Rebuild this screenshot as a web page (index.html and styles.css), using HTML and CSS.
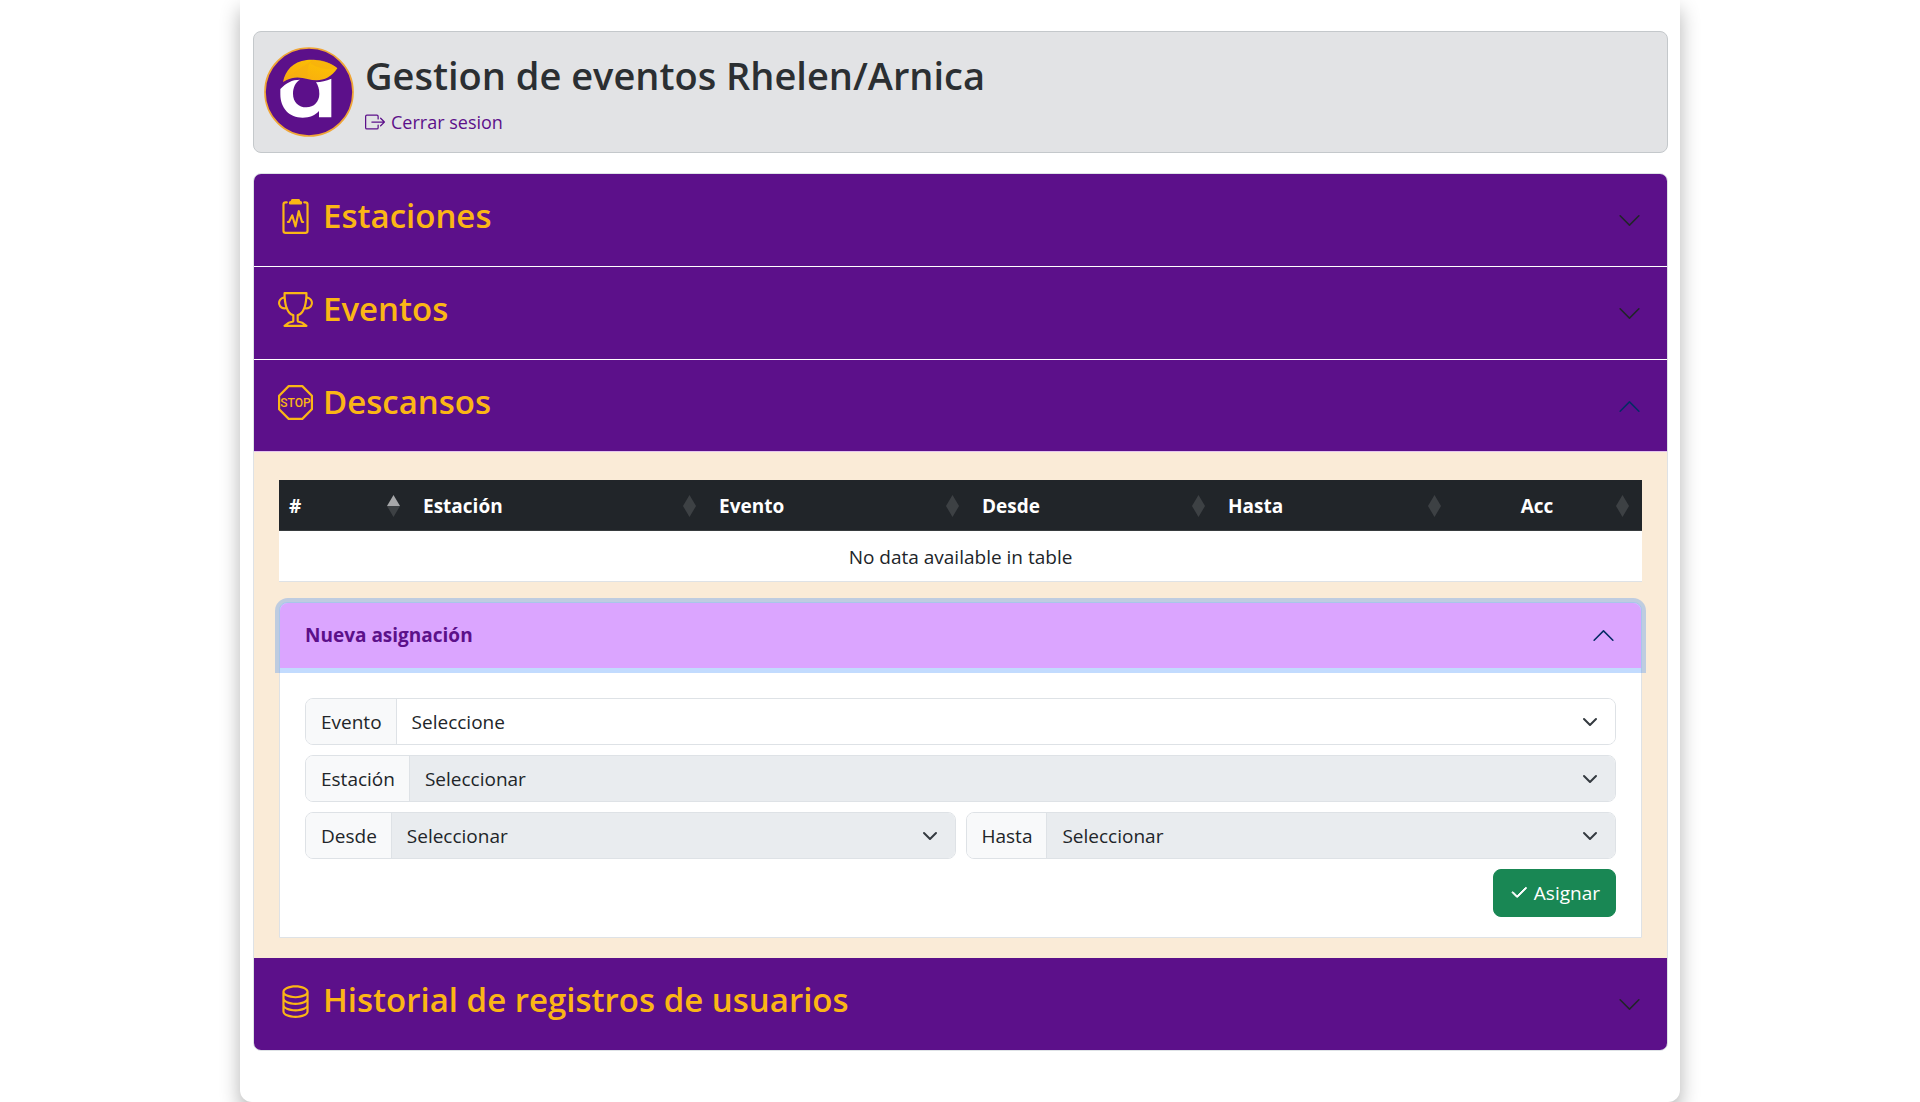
FILE: index.html
```html
<!DOCTYPE html>
<html lang="es">
<head>
<meta charset="utf-8">
<meta name="viewport" content="width=device-width, initial-scale=1">
<title>Gestion de eventos Rhelen/Arnica</title>
<link rel="stylesheet" href="styles.css">
</head>
<body>
<main class="page">
  <header class="banner">
    <svg class="logo" viewBox="104 142 270 270" aria-hidden="true">
      <defs>
        <linearGradient id="leaf" x1="0" y1="1" x2="1" y2="0">
          <stop offset="0" stop-color="#f7a813"/>
          <stop offset="1" stop-color="#fdc500"/>
        </linearGradient>
      </defs>
      <circle cx="239" cy="277" r="132" fill="#5c108a" stroke="#f0a636" stroke-width="5"/>
      <path fill="#fff" d="M153 268C170 250 188 240 212 240C198 248 191 264 191 282C191 307 208 323 231 323C254 323 270 306 270 283C270 268 266 256 260 248C276 247 290 244 306 237V353H269V334C258 347 241 354 220 354C180 354 153 326 153 283Z"/>
      <path fill="url(#leaf)" d="M161 247C168 213 190 186 232 181C268 177 306 189 324 206C307 232 285 242 262 242C232 242 204 220 161 247Z"/>
      <path fill="#f5ad10" opacity=".55" d="M250 180C276 179 306 189 324 206C305 212 272 208 252 196Q236 190 250 180Z"/>
      <path fill="#f5ad10" opacity=".5" d="M250 182C236 193 230 210 236 235C215 230 195 228 161 247C190 222 218 202 250 182Z"/>
    </svg>
    <div>
      <h1 class="banner-title">Gestion de eventos Rhelen/Arnica</h1>
      <a class="logout" href="#"><svg class="icon-sm" viewBox="0 0 16 16" aria-hidden="true"><path d="M10 12.5a.5.5 0 0 1-.5.5h-8a.5.5 0 0 1-.5-.5v-9a.5.5 0 0 1 .5-.5h8a.5.5 0 0 1 .5.5v2a.5.5 0 0 0 1 0v-2A1.5 1.5 0 0 0 9.5 2h-8A1.5 1.5 0 0 0 0 3.5v9A1.5 1.5 0 0 0 1.5 14h8a1.5 1.5 0 0 0 1.5-1.5v-2a.5.5 0 0 0-1 0z"/><path d="M15.854 8.354a.5.5 0 0 0 0-.708l-3-3a.5.5 0 0 0-.708.708L14.293 7.5H5.5a.5.5 0 0 0 0 1h8.793l-2.147 2.146a.5.5 0 0 0 .708.708z"/></svg>Cerrar sesion</a>
    </div>
  </header>

  <div class="accordion">
    <section class="item">
      <button class="head" type="button" aria-expanded="false">
        <span class="head-title"><svg class="icon-lg" viewBox="0 0 16 16" aria-hidden="true"><path d="M9.5 0a.5.5 0 0 1 .5.5.5.5 0 0 0 .5.5.5.5 0 0 1 .5.5V2a.5.5 0 0 1-.5.5h-5A.5.5 0 0 1 5 2v-.5a.5.5 0 0 1 .5-.5.5.5 0 0 0 .5-.5.5.5 0 0 1 .5-.5z"/><path d="M3 2.5a.5.5 0 0 1 .5-.5H4a.5.5 0 0 0 0-1h-.5A1.5 1.5 0 0 0 2 2.5v12A1.5 1.5 0 0 0 3.5 16h9a1.5 1.5 0 0 0 1.5-1.5v-12A1.5 1.5 0 0 0 12.5 1H12a.5.5 0 0 0 0 1h.5a.5.5 0 0 1 .5.5v12a.5.5 0 0 1-.5.5h-9a.5.5 0 0 1-.5-.5z"/><path d="M9.979 5.356a.5.5 0 0 0-.968.04L7.92 10.49l-.94-3.135a.5.5 0 0 0-.926-.08L4.69 10H4.5a.5.5 0 0 0 0 1H5a.5.5 0 0 0 .447-.276l.936-1.873 1.138 3.793a.5.5 0 0 0 .968-.04L9.58 7.51l.94 3.135A.5.5 0 0 0 11 11h.5a.5.5 0 0 0 0-1h-.128z"/></svg>Estaciones</span>
        <svg class="chevron" viewBox="0 0 16 16" aria-hidden="true"><path d="M1.646 4.646a.5.5 0 0 1 .708 0L8 10.293l5.646-5.647a.5.5 0 0 1 .708.708l-6 6a.5.5 0 0 1-.708 0l-6-6a.5.5 0 0 1 0-.708z"/></svg>
      </button>
    </section>

    <section class="item">
      <button class="head" type="button" aria-expanded="false">
        <span class="head-title"><svg class="icon-lg" viewBox="0 0 16 16" aria-hidden="true"><path d="M2.5.5A.5.5 0 0 1 3 0h10a.5.5 0 0 1 .5.5q0 .807-.034 1.536a3 3 0 1 1-1.133 5.89c-.79 1.865-1.878 2.777-2.833 3.011v2.173l1.425.356c.194.048.377.135.537.255L13.3 15.1a.5.5 0 0 1-.3.9H3a.5.5 0 0 1-.3-.9l1.838-1.379c.16-.12.343-.207.537-.255L6.5 13.11v-2.173c-.955-.234-2.043-1.146-2.833-3.012a3 3 0 1 1-1.132-5.89A33 33 0 0 1 2.5.5m.099 2.54a2 2 0 0 0 .72 3.935c-.333-1.05-.588-2.346-.72-3.935m10.083 3.935a2 2 0 0 0 .72-3.935c-.133 1.59-.388 2.885-.72 3.935M3.504 1q.01.775.056 1.469c.13 2.028.457 3.546.87 4.667C5.294 9.48 6.484 10 7 10a.5.5 0 0 1 .5.5v2.61a1 1 0 0 1-.757.97l-1.426.356a.5.5 0 0 0-.179.085L4.5 15h7l-.638-.479a.5.5 0 0 0-.18-.085l-1.425-.356a1 1 0 0 1-.757-.97V10.5A.5.5 0 0 1 9 10c.516 0 1.706-.52 2.57-2.864.413-1.12.74-2.64.87-4.667q.045-.694.056-1.469z"/></svg>Eventos</span>
        <svg class="chevron" viewBox="0 0 16 16" aria-hidden="true"><path d="M1.646 4.646a.5.5 0 0 1 .708 0L8 10.293l5.646-5.647a.5.5 0 0 1 .708.708l-6 6a.5.5 0 0 1-.708 0l-6-6a.5.5 0 0 1 0-.708z"/></svg>
      </button>
    </section>

    <section class="item">
      <button class="head" type="button" aria-expanded="true">
        <span class="head-title"><svg class="icon-lg" viewBox="0 0 32 32" aria-hidden="true"><path transform="scale(2)" d="M4.54.146A.5.5 0 0 1 4.893 0h6.214a.5.5 0 0 1 .353.146l4.394 4.394a.5.5 0 0 1 .146.353v6.214a.5.5 0 0 1-.146.353l-4.394 4.394a.5.5 0 0 1-.353.146H4.893a.5.5 0 0 1-.353-.146L.146 11.46A.5.5 0 0 1 0 11.107V4.893a.5.5 0 0 1 .146-.353zM5.1 1 1 5.1v5.8L5.1 15h5.8l4.1-4.1V5.1L10.9 1z"/><text class="stop" x="16" y="20" text-anchor="middle">STOP</text></svg>Descansos</span>
        <svg class="chevron" viewBox="0 0 16 16" aria-hidden="true"><path d="M1.646 4.646a.5.5 0 0 1 .708 0L8 10.293l5.646-5.647a.5.5 0 0 1 .708.708l-6 6a.5.5 0 0 1-.708 0l-6-6a.5.5 0 0 1 0-.708z"/></svg>
      </button>
      <div class="body">
        <table class="grid">
          <colgroup><col class="c-num"><col class="c-est"><col class="c-eve"><col class="c-des"><col class="c-has"><col class="c-acc"></colgroup>
          <thead>
            <tr>
              <th class="asc" scope="col" aria-sort="ascending">#</th>
              <th scope="col">Estación</th>
              <th scope="col">Evento</th>
              <th scope="col">Desde</th>
              <th scope="col">Hasta</th>
              <th class="center" scope="col">Acc</th>
            </tr>
          </thead>
          <tbody>
            <tr><td colspan="6">No data available in table</td></tr>
          </tbody>
        </table>

        <section class="assign">
          <button class="assign-head" type="button" aria-expanded="true">Nueva asignación
            <svg class="chevron" viewBox="0 0 16 16" aria-hidden="true"><path d="M1.646 4.646a.5.5 0 0 1 .708 0L8 10.293l5.646-5.647a.5.5 0 0 1 .708.708l-6 6a.5.5 0 0 1-.708 0l-6-6a.5.5 0 0 1 0-.708z"/></svg>
          </button>
          <form class="assign-form">
            <div class="field wide">
              <label for="evento">Evento</label>
              <select id="evento"><option>Seleccione</option></select>
            </div>
            <div class="field wide">
              <label for="estacion">Estación</label>
              <select id="estacion" disabled><option>Seleccionar</option></select>
            </div>
            <div class="field">
              <label for="desde">Desde</label>
              <select id="desde" disabled><option>Seleccionar</option></select>
            </div>
            <div class="field">
              <label for="hasta">Hasta</label>
              <select id="hasta" disabled><option>Seleccionar</option></select>
            </div>
            <button class="submit" type="button"><svg class="icon-sm" viewBox="0 0 16 16" aria-hidden="true"><path d="M13.854 3.646a.5.5 0 0 1 0 .708l-7 7a.5.5 0 0 1-.708 0l-3.5-3.5a.5.5 0 1 1 .708-.708L6.5 10.293l6.646-6.647a.5.5 0 0 1 .708 0z" stroke="currentColor" stroke-width=".8"/></svg>Asignar</button>
          </form>
        </section>
      </div>
    </section>

    <section class="item">
      <button class="head" type="button" aria-expanded="false">
        <span class="head-title"><svg class="icon-lg" viewBox="0 0 16 16" aria-hidden="true"><path d="M4.318 2.687C5.234 2.271 6.536 2 8 2s2.766.27 3.682.687C12.644 3.125 13 3.627 13 4c0 .374-.356.875-1.318 1.313C10.766 5.729 9.464 6 8 6s-2.766-.27-3.682-.687C3.356 4.875 3 4.373 3 4c0-.374.356-.875 1.318-1.313M13 5.698V7c0 .374-.356.875-1.318 1.313C10.766 8.729 9.464 9 8 9s-2.766-.27-3.682-.687C3.356 7.875 3 7.373 3 7V5.698c.271.202.58.378.904.525C4.978 6.711 6.427 7 8 7s3.022-.289 4.096-.777A5 5 0 0 0 13 5.698M14 4c0-1.007-.875-1.755-1.904-2.223C11.022 1.289 9.573 1 8 1s-3.022.289-4.096.777C2.875 2.245 2 2.993 2 4v9c0 1.007.875 1.755 1.904 2.223C4.978 15.71 6.427 16 8 16s3.022-.289 4.096-.777C13.125 14.755 14 14.007 14 13zm-1 4.698V10c0 .374-.356.875-1.318 1.313C10.766 11.729 9.464 12 8 12s-2.766-.27-3.682-.687C3.356 10.875 3 10.373 3 10V8.698c.271.202.58.378.904.525C4.978 9.71 6.427 10 8 10s3.022-.289 4.096-.777A5 5 0 0 0 13 8.698m0 3V13c0 .374-.356.875-1.318 1.313C10.766 14.729 9.464 15 8 15s-2.766-.27-3.682-.687C3.356 13.875 3 13.373 3 13v-1.302c.271.202.58.378.904.525C4.978 12.71 6.427 13 8 13s3.022-.289 4.096-.777c.324-.147.633-.323.904-.525"/></svg>Historial de registros de usuarios</span>
        <svg class="chevron" viewBox="0 0 16 16" aria-hidden="true"><path d="M1.646 4.646a.5.5 0 0 1 .708 0L8 10.293l5.646-5.647a.5.5 0 0 1 .708.708l-6 6a.5.5 0 0 1-.708 0l-6-6a.5.5 0 0 1 0-.708z"/></svg>
      </button>
    </section>
  </div>
</main>
</body>
</html>
```
FILE: styles.css
```css
:root {
  --purple: #5c108a;
  --gold: #fbb615;
  --ink: #212529;
  --line: #dee2e6;
}

*, *::before, *::after { box-sizing: border-box; }

body {
  margin: 0;
  background: #fff;
  color: var(--ink);
  font: 19px/30px "Open Sans", "Noto Sans", sans-serif;
}

button, select { font: inherit; color: inherit; }
svg { fill: currentColor; flex: none; }

.page {
  width: 75%;
  margin: 0 auto;
  padding: 31px 12px 51px 13px;
  background: #fff;
  border-radius: 0 0 12px 12px;
  box-shadow: 0 10px 20px rgba(0, 0, 0, .3);
}

.banner {
  display: flex;
  gap: 11px;
  padding: 15px 10px;
  margin-bottom: 20px;
  background: #e2e3e5;
  border: 1px solid #c4c8cb;
  border-radius: 8px;
}
.logo { width: 90px; height: 90px; }
.banner-title {
  margin: 0 0 6px;
  padding-top: 2px;
  font-size: 38px;
  font-weight: 600;
  line-height: 52px;
  color: #2b2f32;
}
.logout {
  display: flex;
  align-items: center;
  gap: 6px;
  color: var(--purple);
  font-size: 18px;
  text-decoration: none;
}
.icon-sm { width: 20px; height: 20px; }

.accordion {
  border: 1px solid var(--line);
  border-radius: 8px;
  overflow: hidden;
}
.item + .item { border-top: 1px solid #fff; }
.accordion .item:last-child { border-top: 0; }
.head {
  display: flex;
  align-items: center;
  justify-content: space-between;
  width: 100%;
  padding: 20px 25px 20px 24px;
  border: 0;
  background: var(--purple);
  color: var(--gold);
  text-align: left;
}
.head[aria-expanded="true"] { box-shadow: inset 0 -1px 0 #e4c4ee; }
.head-title {
  display: flex;
  align-items: center;
  gap: 10px;
  padding: 1px 0 9px;
  font-size: 33px;
  font-weight: 600;
  line-height: 42px;
}
.icon-lg { width: 35px; height: 35px; }
.stop { font: 500 11px Roboto, sans-serif; }
.chevron { width: 25px; height: 25px; color: var(--ink); }
[aria-expanded="true"] .chevron { color: #052c65; transform: rotate(180deg); }

.body { padding: 28px 25px 20px; background: #faebd7; }

.grid {
  width: 100%;
  margin-bottom: 20px;
  table-layout: fixed;
  border-collapse: separate;
  border-spacing: 0;
  background: #fff;
}
.c-num { width: 134px; }
.c-est { width: 296px; }
.c-eve { width: 263px; }
.c-des { width: 246px; }
.c-has { width: 236px; }
.c-acc { width: 188px; }
.grid th {
  position: relative;
  padding: 11px 32px 9px 10px;
  border-bottom: 1px solid #373b3e;
  background: var(--ink);
  color: #fff;
  font-weight: 700;
  text-align: left;
}
.grid th.center { text-align: center; }
.grid th::before, .grid th::after {
  content: "";
  position: absolute;
  right: 13px;
  width: 13px;
  height: 11px;
  background: #fff;
  opacity: .13;
}
.grid th::before { top: 15px; clip-path: polygon(50% 0, 100% 100%, 0 100%); }
.grid th::after { top: 26px; clip-path: polygon(0 0, 100% 0, 50% 100%); }
.grid th.asc::before { opacity: .6; }
.grid td {
  padding: 11px 10px 9px;
  border-bottom: 1px solid var(--line);
  text-align: center;
}

.assign { border: 1px solid var(--line); background: #fff; border-radius: 8px 8px 0 0; }
.assign-head {
  display: flex;
  align-items: center;
  justify-content: space-between;
  width: 100%;
  padding: 17px 25px 18px;
  border: 0;
  border-radius: 8px 8px 0 0;
  background: #dba5ff;
  box-shadow: 0 0 0 5px rgba(13, 110, 253, .25);
  color: var(--purple);
  font-weight: 700;
  text-align: left;
}
.assign-form {
  display: grid;
  grid-template-columns: 1fr 1fr;
  gap: 10px;
  padding: 30px 25px 20px;
}
.field {
  display: flex;
  border: 1px solid var(--line);
  border-radius: 8px;
  overflow: hidden;
}
.wide { grid-column: 1 / -1; }
.field label {
  padding: 8px 14px 7px 15px;
  border-right: 1px solid var(--line);
  background: #f8f9fa;
}
.field select {
  flex: 1;
  min-width: 0;
  padding: 7px 45px 7px 15px;
  border: 0;
  border-radius: 0;
  appearance: none;
  opacity: 1;
  background: #fff url("data:image/svg+xml,%3Csvg xmlns='http://www.w3.org/2000/svg' viewBox='0 0 16 16'%3E%3Cpath fill='none' stroke='%23343a40' stroke-linecap='round' stroke-linejoin='round' stroke-width='2' d='m2 5 6 6 6-6'/%3E%3C/svg%3E") no-repeat right 17px center / 16px 16px;
}
.field select:disabled { background-color: #e9ecef; color: var(--ink); }
.submit {
  grid-column: 2;
  justify-self: end;
  display: flex;
  align-items: center;
  gap: 5px;
  padding: 8px 15px;
  border: 1px solid #198754;
  border-radius: 8px;
  background: #198754;
  color: #fff;
}
```
